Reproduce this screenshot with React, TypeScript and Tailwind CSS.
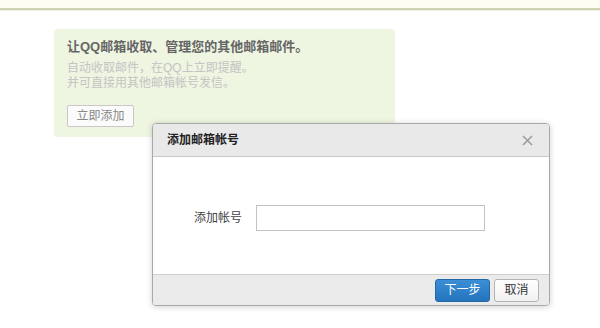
import React from 'react';

// QQ mail: "add other mailbox" promo card + modal dialog on top.

const FONT = "font-['Liberation_Sans','Noto_Sans_CJK_SC',sans-serif]";

function PromoCard() {
  return (
    <div className="ml-[54px] mt-[18px] w-[341px] h-[108px] rounded-[4px] bg-[#eef5e1] pl-[13px] pt-[9px]">
      <div className="text-[13px] font-bold text-[#666] leading-[18px]">
        让QQ邮箱收取、管理您的其他邮箱邮件。
      </div>
      <div className="mt-[5px] text-[12px] leading-[15px] text-[#c4c4c4]">
        <div>自动收取邮件，在QQ上立即提醒。</div>
        <div>并可直接用其他邮箱帐号发信。</div>
      </div>
      <button className="mt-[14px] h-[22px] w-[67px] rounded-[2px] border border-[#c8c8c8] bg-[#fbfbfb] text-[12px] text-[#888] leading-none">
        立即添加
      </button>
    </div>
  );
}

function AddAccountDialog() {
  return (
    <div className="absolute left-[152px] top-[123px] w-[398px] rounded-[4px] border border-[#a9a9a9] bg-white shadow-[0_1px_6px_rgba(0,0,0,0.18)] overflow-hidden">
      <div className="h-[33px] flex items-center justify-between px-[14px] bg-[#e9e9e9] border-b border-[#c9c9c9]">
        <span className="text-[12px] font-bold text-[#222]">添加邮箱帐号</span>
        <svg width="11" height="11" viewBox="0 0 11 11" className="mr-[2px]">
          <path d="M1 1L10 10M10 1L1 10" stroke="#9a9a9a" strokeWidth="1.5" />
        </svg>
      </div>
      <div className="h-[117px] flex items-center pl-[41px] pt-[4px]">
        <span className="text-[12px] text-[#444] w-[62px]">添加帐号</span>
        <input className="h-[26px] w-[229px] border border-[#c2c2c2] bg-white outline-none" />
      </div>
      <div className="h-[31px] flex items-center justify-end gap-[4px] pr-[10px] bg-[#ebebeb] border-t border-[#cfcfcf]">
        <button className="h-[23px] w-[55px] rounded-[3px] border border-[#2568a6] bg-gradient-to-b from-[#3b8fd6] to-[#2473bd] text-[12px] text-white leading-none">
          下一步
        </button>
        <button className="h-[23px] w-[45px] rounded-[3px] border border-[#b3b3b3] bg-gradient-to-b from-[#ffffff] to-[#f1f1f1] text-[12px] text-[#333] leading-none">
          取消
        </button>
      </div>
    </div>
  );
}

export default function App() {
  return (
    <div className={`relative w-[600px] h-[328px] overflow-hidden bg-white ${FONT}`}>
      <div className="h-[10px] bg-[#fdfdf4] border-b-2 border-[#cdd3b2]" />
      <div className="h-[1px] bg-[#eef0e2]" />
      <PromoCard />
      <AddAccountDialog />
    </div>
  );
}
